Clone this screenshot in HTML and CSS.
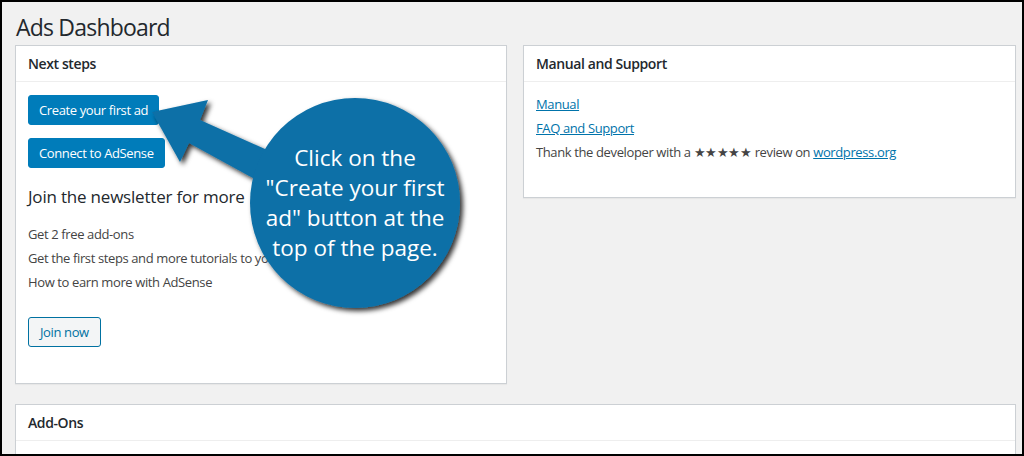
FILE: index.html
```html
<!DOCTYPE html>
<html lang="en">

<head>
  <meta charset="UTF-8">
  <meta name="viewport" content="width=device-width, initial-scale=1.0">
  <title>Ads Dashboard</title>
  <link rel="stylesheet" href="styles.css">
</head>

<body>
  <div class="wrap">
    <h1>Ads Dashboard</h1>
    <div class="columns">
      <div class="postbox">
        <h2>Next steps</h2>
        <div class="inside">
          <a class="button primary">Create your first ad</a>
          <a class="button primary">Connect to AdSense</a>
          <h3>Join the newsletter for more</h3>
          <ul>
            <li>Get 2 free add-ons</li>
            <li>Get the first steps and more tutorials to your inbox</li>
            <li>How to earn more with AdSense</li>
          </ul>
          <a class="button secondary">Join now</a>
        </div>
      </div>
      <div class="postbox">
        <h2>Manual and Support</h2>
        <div class="inside">
          <ul>
            <li><a href="#">Manual</a></li>
            <li><a href="#">FAQ and Support</a></li>
            <li>Thank the developer with a ★★★★★ review on <a href="#">wordpress.org</a></li>
          </ul>
        </div>
      </div>
    </div>
    <div class="postbox addons">
      <h2>Add-Ons</h2>
      <div class="inside"></div>
    </div>
  </div>

  <!-- annotation drawn over the screenshot -->
  <svg class="callout" width="1024" height="456" viewBox="0 0 1024 456">
    <defs>
      <filter id="shade" x="-20%" y="-20%" width="140%" height="140%">
        <feDropShadow dx="3" dy="3" stdDeviation="2.5" flood-color="#000" flood-opacity="0.8"/>
      </filter>
    </defs>
    <g fill="#0b6fa7" filter="url(#shade)">
      <polygon points="152,112 208,100 200,120 330,178 322,216 189,143 180,162"/>
      <circle cx="355" cy="203" r="105"/>
    </g>
  </svg>
  <div class="callout-text">Click on the<br>"Create your first<br>ad" button at the<br>top of the page.</div>
</body>
</html>
```

FILE: styles.css
```css
* {
  margin: 0;
  padding: 0;
  box-sizing: border-box;
}
body {
  position: relative;
  width: 1024px;
  height: 456px;
  overflow: hidden;
  background: #000;
  padding: 2px 2px 2px 2px;
  font-family: "Segoe UI", "Open Sans", "Noto Sans", sans-serif;
  font-size: 13px;
  line-height: 1.4;
  letter-spacing: -0.38px;
  color: #444;
}
.wrap {
  height: 452px;
  background: #f1f1f1;
  padding: 0 6px 0 13px;
  overflow: hidden;
}
h1 {
  font-size: 23px;
  font-weight: 400;
  line-height: 1.3;
  letter-spacing: -0.8px;
  color: #23282d;
  padding: 11px 0 2px 1px;
  height: 43px;
}
.columns {
  display: grid;
  grid-template-columns: 492px 493px;
  gap: 16px;
  align-items: start;
}
.postbox {
  background: #fff;
  border: 1px solid #ccd0d4;
  box-shadow: 0 1px 1px rgba(0,0,0,.04);
}
.postbox h2 {
  font-size: 14px;
  font-weight: 600;
  letter-spacing: -0.4px;
  color: #23282d;
  line-height: 19px;
  padding: 8px 12px;
  border-bottom: 1px solid #eee;
}
.inside {
  padding: 0 12px;
}
.columns .postbox:first-child {
  height: 339px;
}
.columns .postbox:last-child {
  height: 153px;
}
.button {
  display: table;
  height: 30px;
  line-height: 28px;
  padding: 0 10px;
  border-radius: 3px;
  border: 1px solid;
  font-size: 13px;
  text-decoration: none;
}
.primary {
  background: #007cba;
  border-color: #007cba;
  color: #fff;
  margin-top: 13px;
}
.primary + .primary {
  margin-top: 13px;
}
.secondary {
  background: #f3f5f6;
  border-color: #0071a1;
  color: #0071a1;
  margin-top: 26px;
  padding: 0 11px;
}
h3 {
  font-size: 17px;
  font-weight: 500;
  letter-spacing: -0.2px;
  color: #23282d;
  line-height: 24px;
  margin-top: 17px;
  white-space: nowrap;
}
ul {
  list-style: none;
}
.inside ul {
  margin-top: 16px;
}
li {
  line-height: 18px;
  margin-bottom: 6px;
  white-space: nowrap;
}
.columns .postbox:last-child ul {
  margin-top: 13px;
}
a {
  color: #0073aa;
}
.addons {
  margin-top: 20px;
  height: 60px;
}
.callout {
  position: absolute;
  left: 0;
  top: 0;
}
.callout-text {
  position: absolute;
  left: 245px;
  top: 143px;
  width: 220px;
  text-align: center;
  color: #fff;
  font-family: "Open Sans", sans-serif;
  font-size: 22.5px;
  line-height: 30px;
  letter-spacing: 0;
}
```
